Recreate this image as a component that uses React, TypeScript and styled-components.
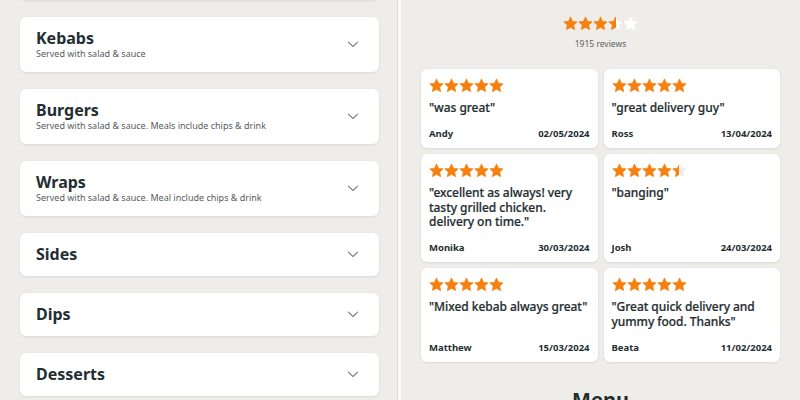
import { useId } from "react";
import styled, { createGlobalStyle } from "styled-components";

const GlobalStyle = createGlobalStyle`
  html, body {
    margin: 0;
    padding: 0;
    background: #efedea;
    font-family: "Noto Sans", "Open Sans", sans-serif;
    color: #242e30;
  }
  * {
    box-sizing: border-box;
  }
`;

const ORANGE = "#f5800f";

type Category = { title: string; description?: string };
type Review = { stars: number; text: string; name: string; date: string };

const categories: Category[] = [
  { title: "Kebabs", description: "Served with salad & sauce" },
  {
    title: "Burgers",
    description: "Served with salad & sauce. Meals include chips & drink",
  },
  {
    title: "Wraps",
    description: "Served with salad & sauce. Meal include chips & drink",
  },
  { title: "Sides" },
  { title: "Dips" },
  { title: "Desserts" },
];

const reviews: Review[] = [
  { stars: 5, text: "\"was great\"", name: "Andy", date: "02/05/2024" },
  { stars: 5, text: "\"great delivery guy\"", name: "Ross", date: "13/04/2024" },
  {
    stars: 5,
    text: "\"excellent as always! very tasty grilled chicken. delivery on time.\"",
    name: "Monika",
    date: "30/03/2024",
  },
  { stars: 4.5, text: "\"banging\"", name: "Josh", date: "24/03/2024" },
  {
    stars: 5,
    text: "\"Mixed kebab always great\"",
    name: "Matthew",
    date: "15/03/2024",
  },
  {
    stars: 5,
    text: "\"Great quick delivery and yummy food. Thanks\"",
    name: "Beata",
    date: "11/02/2024",
  },
];

const Star = ({ fill, empty }: { fill: number; empty: string }) => {
  const id = useId();
  return (
    <StarSvg viewBox="1.5 1 21 21">
      <defs>
        <linearGradient id={id} x1="0" x2="1" y1="0" y2="0">
          <stop offset={fill} stopColor={ORANGE} />
          <stop offset={fill} stopColor={empty} />
        </linearGradient>
      </defs>
      <path
        d="M12 2.2l2.9 6.1 6.7.8-5 4.6 1.35 6.6L12 17l-5.95 3.3 1.35-6.6-5-4.6 6.7-.8z"
        fill={`url(#${id})`}
        stroke={`url(#${id})`}
        strokeWidth="0.8"
        strokeLinejoin="round"
      />
    </StarSvg>
  );
};

const Stars = ({ value, empty }: { value: number; empty: string }) => (
  <StarRow>
    {[0, 1, 2, 3, 4].map((i) => (
      <Star key={i} fill={Math.max(0, Math.min(1, value - i))} empty={empty} />
    ))}
  </StarRow>
);

const Chevron = () => (
  <ChevronSvg viewBox="0 0 12 12">
    <path
      d="M1.5 4.2l4.5 4.3 4.5-4.3"
      fill="none"
      stroke="#2f3638"
      strokeWidth="1"
      strokeLinecap="round"
      strokeLinejoin="round"
    />
  </ChevronSvg>
);

const App = () => {
  return (
    <>
      <GlobalStyle />
      <Page>
        <MenuColumn>
          <CategoryList>
            {/* bottom of the card that has been scrolled out of view */}
            <ScrolledCard />
            {categories.map((c) => (
              <CategoryCard key={c.title}>
                <CategoryText>
                  <CategoryTitle>{c.title}</CategoryTitle>
                  {c.description && (
                    <CategoryDescription>{c.description}</CategoryDescription>
                  )}
                </CategoryText>
                <Chevron />
              </CategoryCard>
            ))}
          </CategoryList>
        </MenuColumn>
        <Divider />
        <InfoColumn>
          <RatingSummary>
            <Stars value={3.5} empty="#ffffff" />
            <ReviewCount>1915 reviews</ReviewCount>
          </RatingSummary>
          <ReviewGrid>
            {reviews.map((r) => (
              <ReviewCard key={r.name}>
                <Stars value={r.stars} empty="#efedea" />
                <ReviewText>{r.text}</ReviewText>
                <ReviewFooter>
                  <span>{r.name}</span>
                  <span>{r.date}</span>
                </ReviewFooter>
              </ReviewCard>
            ))}
          </ReviewGrid>
          <SectionHeading>Menu</SectionHeading>
        </InfoColumn>
      </Page>
    </>
  );
};

const Page = styled.div`
  display: flex;
  width: 800px;
  height: 400px;
  overflow: hidden;
`;

const MenuColumn = styled.div`
  width: 397px;
  flex: none;
  padding: 0 18px 0 20px;
`;

const CategoryList = styled.div`
  display: flex;
  flex-direction: column;
  gap: 17px;
  margin-top: -55px;
`;

const CategoryCard = styled.div`
  display: flex;
  align-items: center;
  justify-content: space-between;
  padding: 11px 20px 12px 16px;
  background: #ffffff;
  border-radius: 6px;
  box-shadow: 0 1px 3px rgba(0, 0, 0, 0.08), 0 0 1px rgba(0, 0, 0, 0.06);
`;

const ScrolledCard = styled(CategoryCard)`
  height: 55px;
`;

const CategoryText = styled.div`
  display: flex;
  flex-direction: column;
`;

const CategoryTitle = styled.span`
  font-size: 16px;
  font-weight: 700;
  line-height: 20px;
  color: #242e30;
`;

const CategoryDescription = styled.span`
  font-size: 9px;
  line-height: 12px;
  color: #585c5e;
`;

const ChevronSvg = styled.svg`
  width: 12px;
  height: 12px;
  flex: none;
`;

const Divider = styled.div`
  width: 4px;
  flex: none;
  border-left: 1px solid #dddbd7;
  background: #fbfbfa;
`;

const InfoColumn = styled.div`
  flex: 1;
  display: flex;
  flex-direction: column;
  padding: 16px 20px 0 20px;
`;

const RatingSummary = styled.div`
  display: flex;
  flex-direction: column;
  align-items: center;
  gap: 7px;
`;

const StarRow = styled.div`
  display: flex;
`;

const StarSvg = styled.svg`
  width: 15px;
  height: 15px;
  display: block;
`;

const ReviewCount = styled.span`
  font-size: 8.5px;
  line-height: 12px;
  color: #5c5f61;
`;

const ReviewGrid = styled.div`
  display: grid;
  grid-template-columns: 1fr 1fr;
  gap: 6px;
  margin-top: 19px;
`;

const ReviewCard = styled.div`
  display: flex;
  flex-direction: column;
  padding: 9px 8px 8px 8px;
  background: #ffffff;
  border-radius: 6px;
  box-shadow: 0 1px 3px rgba(0, 0, 0, 0.08), 0 0 1px rgba(0, 0, 0, 0.06);
`;

const ReviewText = styled.p`
  margin: 8px 0 12.5px 0;
  font-size: 12px;
  font-weight: 500;
  line-height: 14.5px;
  letter-spacing: -0.05px;
  color: #242e30;
  -webkit-text-stroke: 0.2px #242e30;
`;

const ReviewFooter = styled.div`
  display: flex;
  justify-content: space-between;
  margin-top: auto;
  font-size: 9.5px;
  font-weight: 700;
  line-height: 12px;
  color: #242e30;
`;

const SectionHeading = styled.h2`
  margin: 26px 0 0 0;
  text-align: center;
  font-size: 20px;
  font-weight: 700;
  line-height: 24px;
  color: #242e30;
`;

export default App;
